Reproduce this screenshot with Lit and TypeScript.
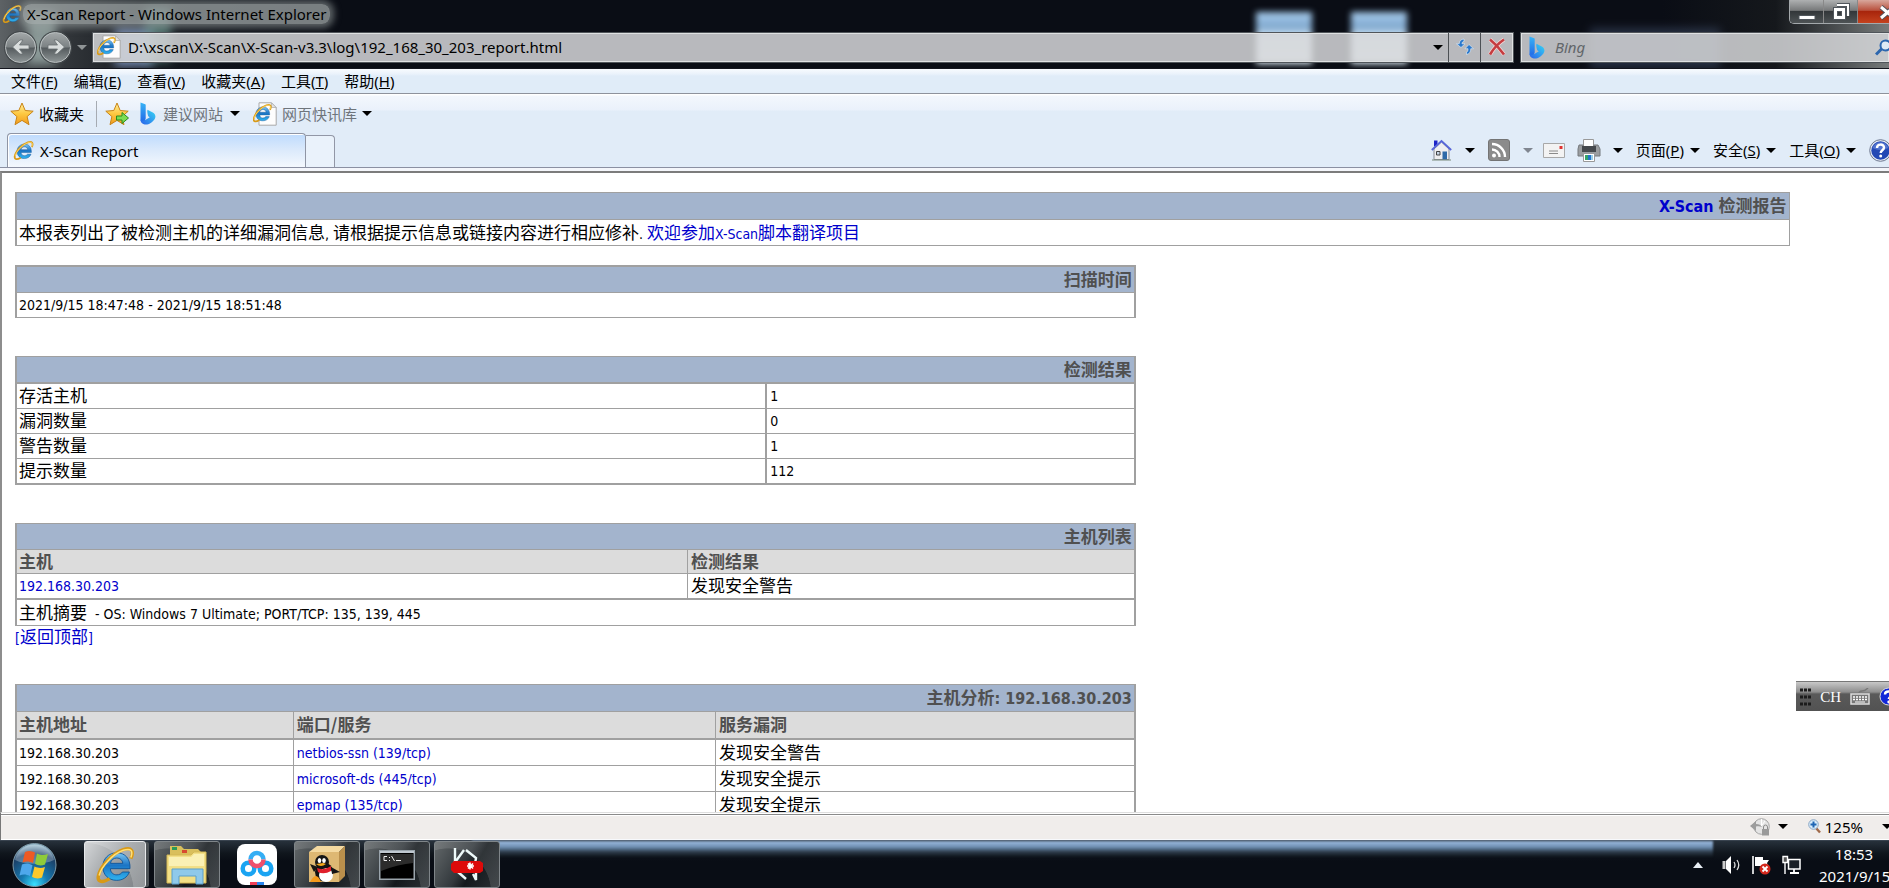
import { LitElement, html, svg, css } from "lit";
import { customElement } from "lit/decorators.js";

const ieMark = svg`
  <path d="M21 14.2H9.2c.2 2.3 1.700 3.700 3.900 3.700 1.500 0 2.700-.6 3.300-1.700h4.200c-1.200 3.200-4 5-7.600 5-4.900 0-8.300-3.300-8.300-8.200 0-4.800 3.500-8.300 8.300-8.300 5.200 0 8.300 3.600 8 9.500zM9.300 11h7.400c-.2-2-1.600-3.200-3.600-3.200S9.600 9 9.300 11z" fill="url(#ieBlue)" stroke="#0b4f94" stroke-width=".5"/>
  <path d="M21.500 8.200C23.600 3.600 22 1 17 2.700 10.500 4.900 3 13 2 18.600c-.7 3.900 2.600 4.200 6.800 1.600" fill="none" stroke="#d99a16" stroke-width="2"/>
  <path d="M21.500 7.500C23 3.600 21.700 1.600 17 3.200 10.800 5.300 3.600 13 2.500 18.300" fill="none" stroke="#ffe07a" stroke-width=".9"/>`;
const ieDefs = svg`<defs><linearGradient id="ieBlue" x1="0" y1="0" x2="0" y2="1"><stop offset="0" stop-color="#7cc8f4"/><stop offset=".45" stop-color="#1c74c4"/><stop offset="1" stop-color="#2fb4f0"/></linearGradient></defs>`;

const ieIcon = (size: number) => html`<svg width=${size} height=${size} viewBox="0 0 24 24" aria-hidden="true">${ieDefs}${ieMark}</svg>`;

const iePage = html`<svg width="24" height="24" viewBox="0 0 24 24" aria-hidden="true">${ieDefs}
  <path d="M6 .8h12.500l4.700 4.700v17.700H6z" fill="#fdfdfd" stroke="#a9a9a9"/><path d="M18.500.8v4.700h4.700z" fill="#e2e2e2" stroke="#a9a9a9" stroke-width=".7"/>
  <g transform="translate(-1 1) scale(.84)">${ieMark}</g></svg>`;

const starIcon = (arrow: boolean) => html`<svg width="24" height="24" viewBox="0 0 24 24" aria-hidden="true">
  <defs><linearGradient id="gold" x1="0" y1="0" x2="0" y2="1"><stop offset="0" stop-color="#fff0a0"/><stop offset=".5" stop-color="#fdc840"/><stop offset="1" stop-color="#f29a1c"/></linearGradient></defs>
  <path d="M12 1l3.200 7.500 8 .7-6.100 5.400 1.900 8.100L12 18.400 5 22.700l1.900-8.100L.8 9.200l8-.7z" fill="url(#gold)" stroke="#c88418" stroke-linejoin="round"/>
  ${arrow ? svg`<path d="M11.500 14h5.500v-3.500l6.500 5.500-6.500 5.500V18h-5.500z" fill="#7bdc52" stroke="#2c8a1e" stroke-linejoin="round"/>` : ""}</svg>`;

const bingIcon = html`<svg width="16" height="23" viewBox="0 0 16 23" aria-hidden="true">
  <defs><linearGradient id="bingA" x1="0" y1="0" x2="0" y2="1"><stop offset="0" stop-color="#38b4f6"/><stop offset="1" stop-color="#1f62e6"/></linearGradient>
  <linearGradient id="bingB" x1="1" y1="0" x2="0" y2="1"><stop offset="0" stop-color="#36d6f4"/><stop offset="1" stop-color="#2a62ea"/></linearGradient></defs>
  <path d="M.5.500l4.700 1.800c.3.100.5.400.5.800v13.500L4 21.500C1.500 21 .5 19.500.5 17.500z" fill="url(#bingA)"/>
  <path d="M7.500 7.800l5.300 2.700c2.600 1.500 3.400 4.200 1.800 6.700-2 3-5.600 5.400-8.600 5.400-3 0-5.500-2-5.500-5.100 1.500 1.700 3.300 1.200 4.800.4l4.500-2.700-1.600-1c-.6-2-1.300-4.200-.7-6.400z" fill="url(#bingB)"/></svg>`;

const caret = (color = "#000") => html`<svg width="10" height="5" viewBox="0 0 10 5" aria-hidden="true"><path d="M0 0h10L5 5z" fill=${color}/></svg>`;

const helpIcon = (size: number) => html`<svg width=${size - 3} height=${size} viewBox="0 0 20 23" preserveAspectRatio="xMinYMid slice" aria-hidden="true">
  <circle cx="11.500" cy="11.500" r="10.800" fill="#e8ecf4" stroke="#6d7890"/><circle cx="11.500" cy="11.500" r="9.200" fill="#2348b4"/><path d="M3.500 9a8.500 8.500 0 0 1 16 0c-5 2.500-11 2.500-16 0z" fill="#6f90e0" opacity=".6"/>
  <path d="M8 9c0-4.500 7-4.500 7-.4 0 2.800-3.300 2.600-3.300 5.400" fill="none" stroke="#fff" stroke-width="2.400"/><circle cx="11.700" cy="17" r="1.500" fill="#fff"/></svg>`;

const arrowGlyph = (flip: boolean) => html`<svg width="20" height="20" viewBox="0 0 20 20" aria-hidden="true"><path transform=${flip ? "translate(20 0) scale(-1 1)" : ""} d="M1.500 10L9 3h3L8.500 8H18v4H8.500l3.500 5H9z" fill="#d8dcdc" stroke="#6a7072" stroke-width=".8"/></svg>`;

const menus: [string, string][] = [["文件", "F"], ["编辑", "E"], ["查看", "V"], ["收藏夹", "A"], ["工具", "T"], ["帮助", "H"]];
const commands: [string, string][] = [["页面", "P"], ["安全", "S"], ["工具", "O"]];

@customElement("browser-chrome")
export class BrowserChrome extends LitElement {
  static styles = css`
    :host { display: block; flex: none; font: 15px/20px "Noto Sans", "Noto Sans CJK SC", sans-serif; color: #000; }
    button, input { font: inherit; color: inherit; border: 0; background: none; padding: 0; margin: 0; outline: 0; }
    button { display: flex; align-items: center; justify-content: center; flex: none; white-space: nowrap; }
    svg { display: block; flex: none; }
    .frame { position: relative; overflow: hidden; height: 69px; box-sizing: border-box; border-bottom: 1px solid #14161e;
      background: linear-gradient(90deg, #5d6265 0, #34383c 60px, #14181e 150px, #0a0d15 300px, #0a0d15 88%, #15181c 94%, #777b7b 100%); }
    .glow { position: absolute; filter: blur(5px); }
    .g1 { left: 28px; top: 12px; width: 28px; height: 52px; background: #a9bcb8; opacity: .7; }
    .g2 { left: 115px; top: 28px; width: 38px; height: 38px; background: #8fa9d8; opacity: .8; }
    .g3 { left: 145px; top: 8px; width: 26px; height: 54px; background: #6fa398; opacity: .6; }
    .g4 { left: 1256px; top: 12px; width: 56px; height: 52px; }
    .g5 { left: 1351px; top: 12px; width: 56px; height: 52px; }
    .g4, .g5 { filter: blur(3px); background: linear-gradient(#a8cdef, #7ea6cc 30%, #d6eaf8 45%, #e6f3fb); }
    .g6 { left: 1590px; top: 28px; width: 130px; height: 40px; background: #3b4862; opacity: .6; }
    .titlebar { position: relative; display: flex; justify-content: space-between; height: 30px; }
    .title { display: flex; align-items: center; gap: 5px; height: 27px; padding-left: 2px; }
    .title h1 { font: inherit; margin: 0; padding: 0 4px; margin-left: -4px; border-radius: 8px; background: rgba(165, 172, 172, .72); box-shadow: 0 0 7px 4px rgba(150, 158, 158, .6); }
    .caption { display: flex; height: 23px; border: 1px solid #a4a9ac; border-width: 0 0 1px 1px; border-radius: 0 0 0 5px; overflow: hidden; }
    .caption button { width: 34px; border-right: 1px solid #888; background: linear-gradient(#aeb0b1, #77797a 45%, #33373a 50%, #4e5355); }
    .caption .close { width: 31px; justify-content: flex-end; border: 0; background: linear-gradient(#d8a79c, #b9503c 45%, #a8250c 50%, #c4421e); }
    .navrow { position: relative; display: flex; align-items: center; height: 34px; }
    .round { width: 31px; height: 31px; box-sizing: border-box; border-radius: 50%; border: 1px solid #b9bebf; box-shadow: 0 0 0 1px #43484b; background: linear-gradient(#a2a7a8, #7c8284 48%, #555b5e 52%, #8d9495); }
    .back { margin: 0 4px 0 5px; }
    .drop { width: 21px; }
    .box { display: flex; align-items: stretch; height: 31px; box-sizing: border-box; border: 1px solid #50555a; box-shadow: inset 0 0 0 1px #dfe1e2; background: rgba(213, 214, 216, .86); }
    .address { flex: 1; padding: 0 1px; }
    .address label { display: flex; align-items: center; padding: 0 7px 0 3px; }
    .address input { flex: 1; min-width: 0; }
    .address .cell { width: 32px; border-left: 1px solid #4c5054; }
    .address .history { width: 21px; }
    .search { width: 369px; flex: none; box-sizing: border-box; margin-left: 6px; align-items: center; padding-left: 8px; border-right: 0; }
    .search label { display: flex; }
    .search input { flex: 1; min-width: 0; padding-left: 10px; }
    .search input::placeholder { color: #62666a; font-style: italic; opacity: 1; }
    .menubar { display: flex; align-items: center; gap: 16px; height: 25px; padding-left: 11px; box-sizing: border-box; background: linear-gradient(#f8fbfe, #eaf2fb 5px, #e0ecf8 7px); border-bottom: 1px solid #8e929c; }
    .bars { background: linear-gradient(#fff 1px, #f3f7fd 2px, #eaf1fb 16px, #e1ecf8 17px); }
    .favbar { display: flex; align-items: center; height: 39px; padding-left: 10px; }
    .fav { gap: 5px; }
    .muted { color: #6f757c; }
    .divider { width: 1px; height: 26px; background: #a6abb2; margin: 0 8px 0 12px; }
    .bing { gap: 7px; margin: 0 13px 0 11px; }
    .fav svg:last-child { margin-left: 0; }
    .tabrow { display: flex; align-items: flex-end; height: 35px; border-bottom: 1px solid #8b90a2; box-sizing: border-box; padding-left: 7px; }
    .tab { justify-content: flex-start; gap: 6px; width: 299px; height: 34px; box-sizing: border-box; padding-left: 5px; border: 1px solid #8f95a4; border-bottom: 0; border-radius: 4px 4px 0 0; background: linear-gradient(#bedbfd, #dceafb 50%, #f4f8fd); box-shadow: inset 1px 1px 0 #fff; }
    .newtab { width: 29px; height: 32px; box-sizing: border-box; border: 1px solid #9297a6; border-left: 0; border-bottom: 0; border-radius: 0 4px 0 0; background: #eaf2fb; }
    .commands { display: flex; align-items: center; height: 34px; margin-left: auto; }
    .commands .wide { gap: 13px; margin-right: 13px; }
    .commands .print { gap: 12px; margin-right: 13px; margin-left: 12px; }
    .commands .mail { margin-left: -3px; }
    .commands .text { gap: 6px; margin-right: 13px; }
    .commands .text:last-of-type { margin-right: 9px; }
    .strip { height: 3px; background: #f4f6fb; }
  `;

  render() {
    return html`
      <header class="frame">
        <div class="glow g1"></div><div class="glow g2"></div><div class="glow g3"></div>
        <div class="glow g4"></div><div class="glow g5"></div><div class="glow g6"></div>
        <div class="titlebar">
          <div class="title">${ieIcon(20)}<h1>X-Scan Report - Windows Internet Explorer</h1></div>
          <div class="caption">
            <button aria-label="最小化"><svg width="18" height="20" viewBox="0 0 18 20"><path d="M1 13.500h16v4H1z" fill="#fff" stroke="#50565c"/></svg></button>
            <button aria-label="还原"><svg width="18" height="18" viewBox="0 0 18 18"><path d="M5 2h11v11" fill="none" stroke="#50565c" stroke-width="4"/><path d="M5 2h11v11" fill="none" stroke="#fff" stroke-width="2"/><path d="M3.500 6.500h8v8h-8z" fill="none" stroke="#50565c" stroke-width="5"/><path d="M3.500 6.500h8v8h-8z" fill="none" stroke="#fff" stroke-width="3"/></svg></button>
            <button class="close" aria-label="关闭"><svg width="10" height="16" viewBox="0 0 10 16"><path d="M2 3l13 11M15 3L2 14" stroke="#50505a" stroke-width="5"/><path d="M2 3l13 11M15 3L2 14" stroke="#fff" stroke-width="3"/></svg></button>
          </div>
        </div>
        <div class="navrow">
          <button class="round back" aria-label="后退">${arrowGlyph(false)}</button>
          <button class="round" aria-label="前进">${arrowGlyph(true)}</button>
          <button class="drop" aria-label="历史记录">${caret("#8f9496")}</button>
          <div class="box address">
            <label for="address">${iePage}</label>
            <input id="address" aria-label="地址" .value=${"D:\\xscan\\X-Scan\\X-Scan-v3.3\\log\\192_168_30_203_report.html"} />
            <button class="history" aria-label="显示地址列表">${caret()}</button>
            <button class="cell" aria-label="刷新"><svg width="18" height="18" viewBox="0 0 18 18"><g fill="#2a78cc" stroke="#e8f2fa" stroke-width=".6"><path d="M5 9.500L.5 5.800h2.700C3.300 3 5 1.200 8 1v2.500C6.500 3.600 6 4.500 6 5.800h3z"/><path d="M13 6.500l4.500 4.200h-2.700c0 3.300-1.500 5.200-4.300 5.800v-2.300c1.200-.5 1.500-1.600 1.500-3.500H9z"/></g></svg></button>
            <button class="cell" aria-label="停止"><svg width="18" height="18" viewBox="0 0 18 18"><path d="M2 1.500c5 4 10 9.500 14 15M16 1.500c-6 4-10.500 9-14 15" fill="none" stroke="#f4d6d6" stroke-width="4"/><path d="M2 1.500c5 4 10 9.500 14 15M16 1.500c-6 4-10.500 9-14 15" fill="none" stroke="#c53c40" stroke-width="2.600"/></svg></button>
          </div>
          <div class="box search">
            <label for="search">${bingIcon}</label>
            <input id="search" aria-label="搜索" placeholder="Bing" />
            <button aria-label="搜索"><svg width="14" height="17" viewBox="0 0 14 17"><path d="M1 15.500L7 9.500" stroke="#2c66ae" stroke-width="3"/><circle cx="10.500" cy="6.500" r="5" fill="#dfeaf4" stroke="#2c66ae" stroke-width="2"/></svg></button>
          </div>
        </div>
      </header>
      <nav class="menubar">${menus.map(([t, k]) => html`<button>${t}(<u>${k}</u>)</button>`)}</nav>
      <div class="bars">
        <div class="favbar">
          <button class="fav">${starIcon(false)}收藏夹</button>
          <span class="divider"></span>
          <button aria-label="添加到收藏夹栏">${starIcon(true)}</button>
          <button class="bing muted">${bingIcon}建议网站${caret()}</button>
          <button class="fav muted">${iePage}网页快讯库${caret()}</button>
        </div>
        <div class="tabrow">
          <button class="tab">${ieIcon(21)}X-Scan Report</button>
          <button class="newtab" aria-label="新选项卡"></button>
          <div class="commands">
            <button class="wide" aria-label="主页"><svg width="21" height="22" viewBox="0 0 21 22"><path d="M3 1.500h3.500v6H3z" fill="#1d24c8"/><path d="M3 10l7.500-7L18 10v10.500H3z" fill="#eeeef0" stroke="#888d98"/><path d="M.800 11L10.500 2l9.700 9" fill="none" stroke="#5866d8" stroke-width="1.800"/><path d="M11.500 12.500h4.500v8h-4.500z" fill="#2f6aa8"/><path d="M5.500 12.500H9V16H5.500z" fill="#c6d4e4" stroke="#444"/><path d="M1 21h19" stroke="#7a8a7a"/></svg>${caret()}</button>
            <button class="wide" aria-label="源"><svg width="22" height="22" viewBox="0 0 22 22"><rect x=".5" y=".5" width="21" height="21" rx="2.500" fill="#8b8b8b" stroke="#747474"/><circle cx="6" cy="16.500" r="2" fill="#fff"/><path d="M4 10.500a7.500 7.500 0 0 1 7.500 7.500M4 5a13 13 0 0 1 13 13" fill="none" stroke="#fff" stroke-width="2.400"/></svg>${caret("#808690")}</button>
            <button class="mail" aria-label="阅读邮件"><svg width="22" height="15" viewBox="0 0 22 15"><path d="M.5.500h21v14H.5z" fill="#f3f3f3" stroke="#a8a8a8"/><path d="M6 8h9M6 10.500h9" stroke="#8a8a8a"/><path d="M16.500 3h3v3h-3z" fill="#e03232"/></svg></button>
            <button class="print" aria-label="打印"><svg width="24" height="23" viewBox="0 0 24 23"><path d="M6.500.500h10V9h-10z" fill="#fff" stroke="#999"/><path d="M2 6h4v3h11V6h4l2 4v7H1v-7z" fill="#9a9da0" stroke="#74787c"/><path d="M5 7h14v6H5z" fill="#45494d"/><path d="M6.500 14.500h11v8h-11z" fill="#fff" stroke="#999"/><path d="M8 16h3v5H8z" fill="#35a46a"/><path d="M11 16h3v5h-3z" fill="#2474c8"/><path d="M14 16h2v5h-2z" fill="#9bd0e8"/></svg>${caret()}</button>
            ${commands.map(([t, k]) => html`<button class="text"><span>${t}(<u>${k}</u>)</span>${caret()}</button>`)}
            <button aria-label="帮助">${helpIcon(23)}</button>
          </div>
        </div>
        <div class="strip"></div>
      </div>
    `;
  }
}

@customElement("scan-report")
export class ScanReport extends LitElement {
  static styles = css`
    :host { display: block; flex: 1; min-height: 0; overflow: hidden; background: #fff; border-left: 2px solid #8d8d8d; border-top: 2px solid #7c7c7c; box-sizing: border-box;
      font: 14px/20px "DejaVu Sans Condensed", "Noto Sans", "Noto Sans CJK SC", sans-serif; }
    .page { padding: 19px 6px 0 13px; }
    .zh { font-family: "Noto Sans CJK SC", sans-serif; font-size: 17px; }
    a { color: #0000cc; text-decoration: none; }
    table { border-collapse: separate; border-spacing: 0; table-layout: fixed; width: 60%; border: 2px solid #a0a0a0; border-top-width: 1px; border-bottom: 0; margin: 38px 0 0; }
    .full { width: 95%; border-right-width: 1px; margin: 0; }
    .first { margin-top: 19px; border-top-width: 2px; }
    th, td { box-sizing: border-box; height: 25px; padding: 0 2px; text-align: left; vertical-align: middle; white-space: nowrap; border-bottom: 1px solid #a0a0a0; }
    th + th, td + td { border-left: 1px solid #a0a0a0; padding-left: 3px; }
    .title { height: 26px; text-align: right; background: #a3b4cd; color: #505050; font-size: 16px; font-weight: bold; }
    .tall .title { height: 27px; }
    .tall td { height: 26px; }
    .strong { border-bottom-width: 2px; }
    .title.strong { height: 27px; }
    .grey th { height: 24px; background: #dcdcdc; color: #505050; font-weight: bold; }
    .grey .strong { height: 28px; }
    .host td { height: 26px; }
    .counts td + td { border-left-width: 2px; }
    .counts tr:last-child td { height: 26px; border-bottom-width: 2px; }
    .c67 { width: 67%; } .c60 { width: 60%; } .c25 { width: 24.7%; } .c38 { width: 37.8%; }
    .top { display: block; height: 20px; }
  `;

  render() {
    const counts = [["存活主机", "1"], ["漏洞数量", "0"], ["警告数量", "1"], ["提示数量", "112"]];
    const services = [["netbios-ssn (139/tcp)", "发现安全警告"], ["microsoft-ds (445/tcp)", "发现安全提示"], ["epmap (135/tcp)", "发现安全提示"]];
    return html`<main class="page">
      <table class="full tall">
        <tr><th class="title"><a href="#xscan">X-Scan</a> <span class="zh">检测报告</span></th></tr>
        <tr><td><span class="zh">本报表列出了被检测主机的详细漏洞信息</span>, <span class="zh">请根据提示信息或链接内容进行相应修补</span>. <a href="#translate"><span class="zh">欢迎参加</span>X-Scan<span class="zh">脚本翻译项目</span></a></td></tr>
      </table>
      <table class="first">
        <tr><th class="title"><span class="zh">扫描时间</span></th></tr>
        <tr><td>2021/9/15 18:47:48 - 2021/9/15 18:51:48</td></tr>
      </table>
      <table class="counts">
        <colgroup><col class="c67" /><col /></colgroup>
        <tr><th class="title strong" colspan="2"><span class="zh">检测结果</span></th></tr>
        ${counts.map(([k, v]) => html`<tr><td><span class="zh">${k}</span></td><td>${v}</td></tr>`)}
      </table>
      <table>
        <colgroup><col class="c60" /><col /></colgroup>
        <tr><th class="title" colspan="2"><span class="zh">主机列表</span></th></tr>
        <tr class="grey"><th><span class="zh">主机</span></th><th><span class="zh">检测结果</span></th></tr>
        <tr class="host"><td class="strong"><a href="#host">192.168.30.203</a></td><td class="strong"><span class="zh">发现安全警告</span></td></tr>
        <tr class="host"><td colspan="2"><span class="zh">主机摘要</span>&nbsp; - OS: Windows 7 Ultimate; PORT/TCP: 135, 139, 445</td></tr>
      </table>
      <a class="top" href="#top">[<span class="zh">返回顶部</span>]</a>
      <table class="tall services">
        <colgroup><col class="c25" /><col class="c38" /><col /></colgroup>
        <tr><th class="title" colspan="3"><span class="zh">主机分析</span>: 192.168.30.203</th></tr>
        <tr class="grey"><th class="strong"><span class="zh">主机地址</span></th><th class="strong"><span class="zh">端口/服务</span></th><th class="strong"><span class="zh">服务漏洞</span></th></tr>
        ${services.map(([s, r]) => html`<tr><td>192.168.30.203</td><td><a href="#service">${s}</a></td><td><span class="zh">${r}</span></td></tr>`)}
      </table>
    </main>`;
  }
}

@customElement("status-bar")
export class StatusBar extends LitElement {
  static styles = css`
    :host { display: flex; flex: none; align-items: center; justify-content: flex-end; box-sizing: border-box; height: 28px; border-top: 1px solid #dedede; background: #f0edeb; box-shadow: inset 0 1px #fff, inset 0 2px #8a8a8a, inset 0 3px #fff, inset 0 -1px #fff; border-left: 1px solid #777;
      font: 15px/20px "Noto Sans", sans-serif; }
    button { display: flex; align-items: center; border: 0; background: none; padding: 0; font: inherit; color: #000; }
    svg { display: block; }
    .privacy { gap: 8px; margin-right: 20px; }
    .zoom { gap: 4px; }
    .zoom svg:last-child { margin-left: 15px; }
  `;
  render() {
    return html`
      <button class="privacy" aria-label="保护模式"><svg width="20" height="18" viewBox="0 0 20 18"><circle cx="11.500" cy="8.500" r="7.800" fill="#e4e4e4" stroke="#a4a4a4"/><path d="M0 8l6-5v3c3 0 5 1 6 3-2-1-4-1-6-.5V13z" fill="#9c9c9c"/><path d="M11.500 1v7M15 3l-3 4" stroke="#fff"/><path d="M12 11h7v6.500h-7z" fill="#9a9a9a"/><path d="M13.500 11V9a2 2 0 0 1 4 0v2" fill="none" stroke="#8a8a8a"/></svg>${caret()}</button>
      <button class="zoom"><svg width="13" height="15" viewBox="0 0 13 15"><path d="M8 9l4 4.500" stroke="#a06a4a" stroke-width="2.400"/><circle cx="5.500" cy="5.500" r="4.800" fill="#d8ecfa" stroke="#8aa6c4"/><path d="M5.500 2.500v6M2.500 5.500h6" stroke="#1f66b4" stroke-width="2"/></svg>125%<svg width="7" height="5" viewBox="0 0 7 5"><path d="M0 0h10L5 5z"/></svg></button>`;
  }
}

@customElement("task-bar")
export class TaskBar extends LitElement {
  static styles = css`
    :host { display: flex; flex: none; height: 48px; box-sizing: border-box; border-top: 1px solid #39434f; position: relative; background: linear-gradient(#27313b, #10161d 12px, #090d15 20px); color: #fff;
      font: 15px/22px "Noto Sans", sans-serif; }
    :host::before { content: ""; position: absolute; left: 25%; right: 176px; top: 0; height: 16px; background: linear-gradient(#9fbde0, #6f90b4 6px, #2c3a49 11px, transparent); filter: blur(1px); }
    button { display: flex; align-items: center; justify-content: center; flex: none; box-sizing: border-box; border: 0; background: none; padding: 0; }
    svg { display: block; }
    .start { width: 45px; margin: 0 27px 0 12px; }
    .apps { display: flex; gap: 4px; position: relative; }
    .app { width: 66px; border: 1px solid #7f8589; border-radius: 3px; background: radial-gradient(circle at 20% 110%, transparent 60%, rgba(255, 255, 255, .12) 61%), linear-gradient(120deg, #63686a, #33393d 45%, #14191d 60%, #2a3034); }
    .active { border-color: #e6e8ea; background: radial-gradient(circle at 0 110%, transparent 62%, rgba(255, 255, 255, .18) 63%), linear-gradient(120deg, #d4d6d8, #9b9fa2 50%, #7a7f83); box-shadow: 4px 0 0 -1px #4c5256; width: 62px; margin-right: 4px; }
    .plain { border-color: transparent; background: none; }
    .tray { display: flex; align-items: center; margin-left: auto; position: relative; }
    .tray button { margin-right: 11px; }
    .tray .up { margin-right: 19px; }
    .tray .net { margin-right: 18px; }
    .clock { width: 70px; flex: none; text-align: center; padding: 2px 0; align-self: stretch; overflow: hidden; white-space: nowrap; }
    .clock time { display: block; }
    .clock .date { text-align: left; }
  `;
  render() {
    return html`
      <button class="start" aria-label="开始"><svg width="45" height="46" viewBox="0 0 45 46">
        <defs><radialGradient id="orb" cx=".5" cy=".95" r=".9"><stop offset="0" stop-color="#38e0ff"/><stop offset=".35" stop-color="#1679b0"/><stop offset=".8" stop-color="#1b3f66"/><stop offset="1" stop-color="#8fb4c8"/></radialGradient></defs>
        <circle cx="22.500" cy="23" r="21.500" fill="url(#orb)" stroke="#7e9aa8"/><path d="M3 18a20 20 0 0 1 39 0c-10 5-29 5-39 0z" fill="#fff" opacity=".28"/>
        <path d="M13 10c4-2 7-1 10 .5L21 21c-4-2-7-2-10.500-.5z" fill="#ee5a24"/><path d="M25 11.500c4 2 7 2 11 .5l-3 10.500c-4 1.500-7 1-10-.7z" fill="#8fcb3a"/>
        <path d="M10 22.500c4-1.500 7-1 10.500.7L18 34c-4-2-7-2-10.500-.5z" fill="#4ea8ec"/><path d="M22.500 24.500c4 1.700 6.500 2 10.500.5l-3 10.500c-4 1.500-7 1-10-.7z" fill="#fcc92c"/></svg></button>
      <div class="apps">
        <button class="app active" aria-label="Internet Explorer">${ieIcon(40)}</button>
        <button class="app" aria-label="资源管理器"><svg width="42" height="40" viewBox="0 0 42 40"><path d="M4 1h11l3 3h14l3 3v30H4z" fill="#d9bf5c"/><path d="M6 2h5v3H6z" fill="#2c9a58"/><path d="M16 5h5v3h-5z" fill="#d84a30"/><path d="M27 7h7v3h-7z" fill="#3a8ad0"/><path d="M1 10h24l3-3h12v31H1z" fill="#f2df86" stroke="#d3b755"/><path d="M3 12h22l3-3h10v12H3z" fill="#faf0b4"/><path d="M6 24h31v15h-7v-8H13v8H6z" fill="#8fc9ea" stroke="#5a9fca"/></svg></button>
        <button class="app plain" aria-label="百度网盘"><svg width="40" height="41" viewBox="0 0 40 41"><rect width="40" height="41" rx="8" fill="#fff"/><g fill="none" stroke-width="4.500"><circle cx="11.500" cy="24.500" r="5.800" stroke="#1aa4f2"/><circle cx="28.500" cy="24.500" r="5.800" stroke="#1aa4f2"/><path d="M13.500 15.500a6.500 6.500 0 0 1 13 0" stroke="#35aef4"/><path d="M13.500 15.500a6.500 6.500 0 0 0 13 0" stroke="#f0506c"/></g><path d="M13 38h7v3h-7z" fill="#f04058"/><path d="M20 38h7v3h-7z" fill="#2a86f0"/></svg></button>
        <button class="app" aria-label="QQ"><svg width="40" height="40" viewBox="0 0 40 40"><path d="M2 7l8-6h28l-6 6z" fill="#f4d9a0"/><path d="M32 7l6-6v30l-6 6z" fill="#b98f4c"/><path d="M2 7h30v30H2z" fill="#deb873"/><ellipse cx="17" cy="27" rx="9" ry="9.500" fill="#111"/><ellipse cx="19" cy="30" rx="7" ry="7" fill="#fff"/><circle cx="15" cy="17" r="7" fill="#151515"/><path d="M3 19l8 3-4 5z" fill="#151515"/><path d="M24 22l9 5-8 2z" fill="#151515"/><ellipse cx="12.500" cy="15.500" rx="1.800" ry="2.600" fill="#fff"/><ellipse cx="17" cy="15.500" rx="1.800" ry="2.600" fill="#fff"/><path d="M9 19q5 4 10 0l-3-1z" fill="#f4a81c"/><path d="M10 23q7 3 14-2v5q-7 4-13 1z" fill="#e0202c"/><path d="M3 37c4-8 8-8 11 0z" fill="#f49a1c"/></svg></button>
        <button class="app" aria-label="命令提示符"><svg width="36" height="30" viewBox="0 0 36 30"><path d="M.5.500h35v29H.5z" fill="#000" stroke="#9aa4ac" stroke-width="2"/><path d="M1 1h34v2H1z" fill="#c0c8d0"/><path d="M2 4h32v9q-14 1-32 8z" fill="#2c2c2c"/><g stroke="#eee" fill="none"><path d="M8 6.500H5v4h3M10.500 7v1M10.500 10v1M12.500 6l3 5M17 10.500h5"/></g></svg></button>
        <button class="app" aria-label="X-Scan"><svg width="32" height="36" viewBox="0 0 32 36"><g stroke="#eefafa" stroke-width="2.400" fill="none"><path d="M4 1v14M13 3L5 14M15 3l10 8-1 6M7 25l8 7M14 22l8 2M25 22v11l-3-6"/></g><path d="M3 14h26l3 2v8l-3 2H3l-3-3v-6z" fill="#dd0a0a"/><path d="M19 15.500v7M16 19h7M17 16.500l5 5M22 16.500l-5 5" stroke="#fff" stroke-width="1.600"/></svg></button>
      </div>
      <div class="tray">
        <button class="up" aria-label="显示隐藏的图标"><svg width="10" height="6" viewBox="0 0 10 6"><path d="M0 6l5-6 5 6z" fill="#e8eef4"/></svg></button>
        <button aria-label="音量"><svg width="19" height="20" viewBox="0 0 19 20"><path d="M.5 6h3v8h-3z" fill="#ccc"/><path d="M4 6l5-5v18l-5-5z" fill="#fff"/><path d="M12 7q2 3 0 6M15 5q3.500 5 0 10" fill="none" stroke="#ddd" stroke-width="1.300"/></svg></button>
        <button aria-label="操作中心"><svg width="19" height="20" viewBox="0 0 19 20"><path d="M1 1v18" stroke="#fff" stroke-width="1.600"/><path d="M3 2h8v3h6l-2 3 1 3H3z" fill="#fff"/><circle cx="13" cy="14" r="5.500" fill="#d4281c"/><path d="M10.500 11.500l5 5M15.500 11.500l-5 5" stroke="#fff" stroke-width="1.800"/></svg></button>
        <button class="net" aria-label="网络"><svg width="19" height="20" viewBox="0 0 19 20"><path d="M6.500 4.500h11.500v9.500H6.500z" fill="#1a2026" stroke="#fff" stroke-width="1.500"/><path d="M12 14v3M8 18h9" stroke="#fff" stroke-width="1.800"/><path d="M1 1.500h4.500v6H1zM3 8v11" fill="#555" stroke="#fff" stroke-width="1.400"/></svg></button>
        <div class="clock"><time>18:53</time><time class="date">2021/9/15</time></div>
      </div>`;
  }
}

@customElement("app-root")
export class AppRoot extends LitElement {
  static styles = css`
    :host { display: flex; flex-direction: column; height: 100vh; overflow: hidden; position: relative; background: #fff; }
    .ime { position: absolute; right: 0; bottom: 177px; display: flex; align-items: center; gap: 9px; height: 30px; box-sizing: border-box; padding-left: 4px; border-top: 1px solid #777; background: linear-gradient(#c8c8c8, #8e8e8e 10px, #5a5a5a 12px, #525252); color: #fff; font: 15px/20px "Liberation Serif", serif; }
    .ime button { border: 0; background: none; padding: 0; color: inherit; font: inherit; display: flex; }
    .ime svg { display: block; }
  `;
  render() {
    return html`
      <browser-chrome></browser-chrome>
      <scan-report></scan-report>
      <status-bar></status-bar>
      <task-bar></task-bar>
      <div class="ime" role="toolbar" aria-label="语言栏">
        <svg width="11" height="18" viewBox="0 0 11 18"><g stroke="#1c1c1c" stroke-width="3" stroke-dasharray="3 1"><path d="M0 2h11M0 9h11M0 16h11"/></g></svg>
        <button>CH</button>
        <button aria-label="键盘"><svg width="20" height="17" viewBox="0 0 20 17"><path d="M9 6q0-3 3-3t6-3" fill="none" stroke="#777" stroke-width="1.500"/><path d="M1 6h18v10H1z" fill="#777" stroke="#ddd" stroke-width="1.500"/><path d="M3 9h14M3 11.500h14" stroke="#fff" stroke-width="1.400" stroke-dasharray="2 1"/><path d="M5 14h10" stroke="#fff"/></svg></button>
        <button aria-label="帮助"><svg width="10" height="19" viewBox="0 0 10 19"><circle cx="9.500" cy="9.500" r="8.500" fill="#1226d8" stroke="#ddd"/><path d="M6 7.500c0-4 7-4 7 0 0 2.500-3.200 2.300-3.200 4.500" fill="none" stroke="#fff" stroke-width="2.400"/><circle cx="9.700" cy="15" r="1.400" fill="#fff"/></svg></button>
      </div>`;
  }
}
